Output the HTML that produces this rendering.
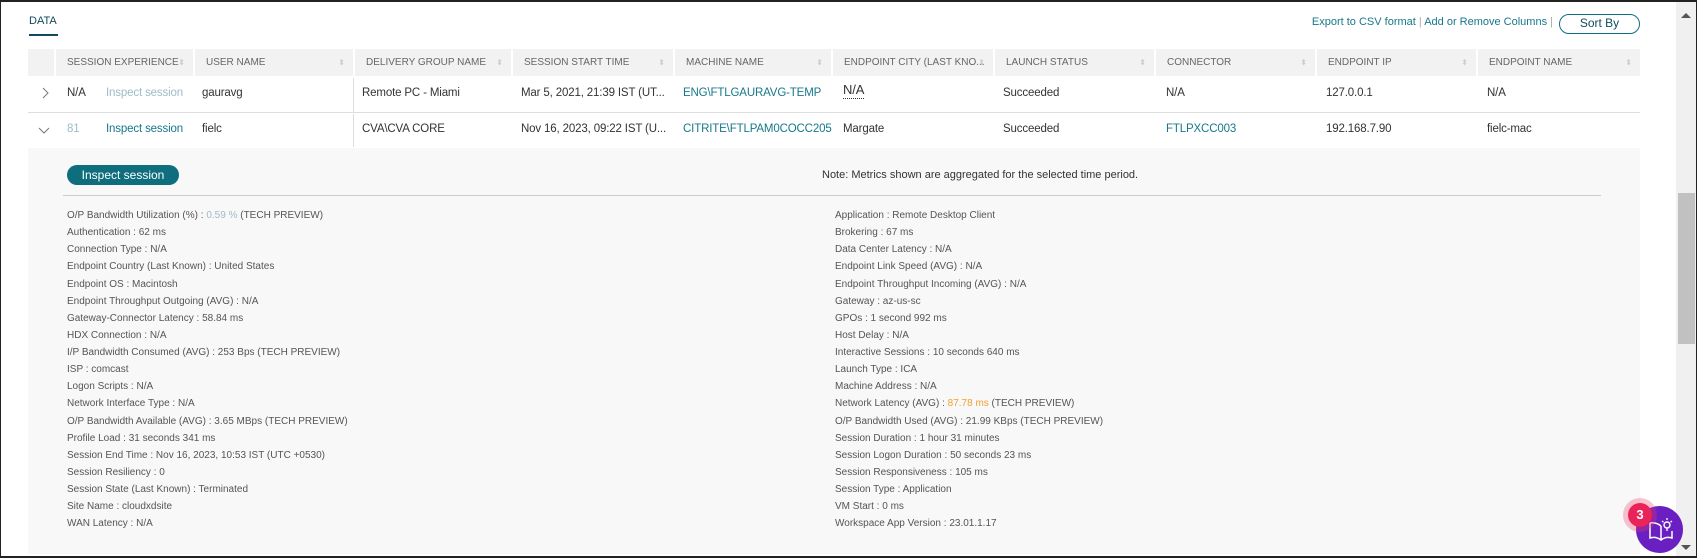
<!DOCTYPE html>
<html><head><meta charset="utf-8"><style>
*{margin:0;padding:0;box-sizing:border-box}
body{width:1697px;height:558px;overflow:hidden;background:#fff;font-family:"Liberation Sans",sans-serif;position:relative;color:#333}
.frame{position:absolute;left:0;top:0;width:1697px;height:558px;border:1px solid #222;border-top:2px solid #222;border-bottom:2px solid #222}
.abs{position:absolute;white-space:nowrap}
.hdr{position:absolute;top:49px;height:27px;background:#f2f2f2;font-size:10px;color:#666;line-height:27px;padding-left:11px;overflow:hidden;white-space:nowrap}
.hdr .s{position:absolute;right:8px;top:0;color:#ccc;font-size:8px}
.cell{position:absolute;font-size:11.5px;letter-spacing:-0.15px;line-height:14px;white-space:nowrap;color:#333}
.teal{color:#17788a}
.d{position:absolute;font-size:10px;color:#555;white-space:nowrap;line-height:12px}
.g{color:#9dbcc8}.o{color:#f0a030}
</style></head><body>
<div class="abs" style="left:29px;top:15px;font-size:11px;color:#124a5c">DATA</div>
<div class="abs" style="left:29px;top:34px;width:29px;height:2px;background:#124a5c"></div>
<div class="abs" style="right:144px;top:16px;font-size:11px;color:#17788a">Export to CSV format <span style="color:#aaa">|</span> Add or Remove Columns <span style="color:#aaa">|</span></div>
<div class="abs" style="left:1559px;top:14px;width:81px;height:20px;border:1.5px solid #0f6f80;border-radius:10px;text-align:center;font-size:12px;line-height:17px;color:#124a5c">Sort By</div>

<div class="hdr" style="left:28px;width:26px"></div>
<div class="hdr" style="left:56px;width:137px">SESSION EXPERIENCE<span class="s">⬍</span></div>
<div class="hdr" style="left:195px;width:158px">USER NAME<span class="s">⬍</span></div>
<div class="hdr" style="left:355px;width:156px">DELIVERY GROUP NAME<span class="s">⬍</span></div>
<div class="hdr" style="left:513px;width:160px">SESSION START TIME<span class="s">⬍</span></div>
<div class="hdr" style="left:675px;width:156px">MACHINE NAME<span class="s">⬍</span></div>
<div class="hdr" style="left:833px;width:160px">ENDPOINT CITY (LAST KNO...<span class="s">⬍</span></div>
<div class="hdr" style="left:995px;width:159px">LAUNCH STATUS<span class="s">⬍</span></div>
<div class="hdr" style="left:1156px;width:159px">CONNECTOR<span class="s">⬍</span></div>
<div class="hdr" style="left:1317px;width:159px">ENDPOINT IP<span class="s">⬍</span></div>
<div class="hdr" style="left:1478px;width:162px">ENDPOINT NAME<span class="s">⬍</span></div>

<div class="abs" style="left:28px;top:112px;width:1612px;height:1px;background:#ddd"></div>
<div class="abs" style="left:353px;top:78px;width:1px;height:34px;background:#ddd"></div>
<div class="abs" style="left:353px;top:114px;width:1px;height:33px;background:#ddd"></div>
<svg class="abs" style="left:41px;top:87px" width="10" height="12"><path d="M2 1 L7 6 L2 11" fill="none" stroke="#777" stroke-width="1"/></svg>
<svg class="abs" style="left:38px;top:127px" width="12" height="8"><path d="M1 1 L6 6 L11 1" fill="none" stroke="#777" stroke-width="1"/></svg>
<div class="cell" style="left:67px;top:86px">N/A</div>
<div class="cell g" style="left:106px;top:86px">Inspect session</div>
<div class="cell" style="left:202px;top:86px">gauravg</div>
<div class="cell" style="left:362px;top:86px">Remote PC - Miami</div>
<div class="cell" style="left:521px;top:86px">Mar 5, 2021, 21:39 IST (UT...</div>
<div class="cell teal" style="left:683px;top:86px">ENG\FTLGAURAVG-TEMP</div>
<div class="cell" style="left:843px;top:83px;font-size:13px;border-bottom:1px dotted #333;padding-bottom:1px">N/A</div>
<div class="cell" style="left:1003px;top:86px">Succeeded</div>
<div class="cell" style="left:1166px;top:86px">N/A</div>
<div class="cell" style="left:1326px;top:86px">127.0.0.1</div>
<div class="cell" style="left:1487px;top:86px">N/A</div>

<div class="cell g" style="left:67px;top:122px">81</div>
<div class="cell teal" style="left:106px;top:122px">Inspect session</div>
<div class="cell" style="left:202px;top:122px">fielc</div>
<div class="cell" style="left:362px;top:122px">CVA\CVA CORE</div>
<div class="cell" style="left:521px;top:122px">Nov 16, 2023, 09:22 IST (U...</div>
<div class="cell teal" style="left:683px;top:122px">CITRITE\FTLPAM0COCC205</div>
<div class="cell" style="left:843px;top:122px">Margate</div>
<div class="cell" style="left:1003px;top:122px">Succeeded</div>
<div class="cell teal" style="left:1166px;top:122px">FTLPXCC003</div>
<div class="cell" style="left:1326px;top:122px">192.168.7.90</div>
<div class="cell" style="left:1487px;top:122px">fielc-mac</div>

<div class="abs" style="left:28px;top:148px;width:1612px;height:406px;background:#f8f8f8"></div>
<div class="abs" style="left:67px;top:165px;width:112px;height:20px;border-radius:10px;background:#0e6e7e;color:#fff;font-size:12px;line-height:20px;text-align:center">Inspect session</div>
<div class="abs" style="left:822px;top:169px;font-size:11px;color:#333">Note: Metrics shown are aggregated for the selected time period.</div>
<div class="abs" style="left:63px;top:195px;width:1538px;height:1px;background:#ccc"></div>

<div style="position:absolute;left:0;top:2px;width:1px;height:1px"></div>
<div class="d" style="left:67px;top:210px">O/P Bandwidth Utilization (%) : <span class="g">0.59 %</span> (TECH PREVIEW)</div>
<div class="d" style="left:67px;top:227px">Authentication : 62 ms</div>
<div class="d" style="left:67px;top:244px">Connection Type : N/A</div>
<div class="d" style="left:67px;top:261px">Endpoint Country (Last Known) : United States</div>
<div class="d" style="left:67px;top:279px">Endpoint OS : Macintosh</div>
<div class="d" style="left:67px;top:296px">Endpoint Throughput Outgoing (AVG) : N/A</div>
<div class="d" style="left:67px;top:313px">Gateway-Connector Latency : 58.84 ms</div>
<div class="d" style="left:67px;top:330px">HDX Connection : N/A</div>
<div class="d" style="left:67px;top:347px">I/P Bandwidth Consumed (AVG) : 253 Bps (TECH PREVIEW)</div>
<div class="d" style="left:67px;top:364px">ISP : comcast</div>
<div class="d" style="left:67px;top:381px">Logon Scripts : N/A</div>
<div class="d" style="left:67px;top:398px">Network Interface Type : N/A</div>
<div class="d" style="left:67px;top:416px">O/P Bandwidth Available (AVG) : 3.65 MBps (TECH PREVIEW)</div>
<div class="d" style="left:67px;top:433px">Profile Load : 31 seconds 341 ms</div>
<div class="d" style="left:67px;top:450px">Session End Time : Nov 16, 2023, 10:53 IST (UTC +0530)</div>
<div class="d" style="left:67px;top:467px">Session Resiliency : 0</div>
<div class="d" style="left:67px;top:484px">Session State (Last Known) : Terminated</div>
<div class="d" style="left:67px;top:501px">Site Name : cloudxdsite</div>
<div class="d" style="left:67px;top:518px">WAN Latency : N/A</div>

<div class="d" style="left:835px;top:210px">Application : Remote Desktop Client</div>
<div class="d" style="left:835px;top:227px">Brokering : 67 ms</div>
<div class="d" style="left:835px;top:244px">Data Center Latency : N/A</div>
<div class="d" style="left:835px;top:261px">Endpoint Link Speed (AVG) : N/A</div>
<div class="d" style="left:835px;top:279px">Endpoint Throughput Incoming (AVG) : N/A</div>
<div class="d" style="left:835px;top:296px">Gateway : az-us-sc</div>
<div class="d" style="left:835px;top:313px">GPOs : 1 second 992 ms</div>
<div class="d" style="left:835px;top:330px">Host Delay : N/A</div>
<div class="d" style="left:835px;top:347px">Interactive Sessions : 10 seconds 640 ms</div>
<div class="d" style="left:835px;top:364px">Launch Type : ICA</div>
<div class="d" style="left:835px;top:381px">Machine Address : N/A</div>
<div class="d" style="left:835px;top:398px">Network Latency (AVG) : <span class="o">87.78 ms</span> (TECH PREVIEW)</div>
<div class="d" style="left:835px;top:416px">O/P Bandwidth Used (AVG) : 21.99 KBps (TECH PREVIEW)</div>
<div class="d" style="left:835px;top:433px">Session Duration : 1 hour 31 minutes</div>
<div class="d" style="left:835px;top:450px">Session Logon Duration : 50 seconds 23 ms</div>
<div class="d" style="left:835px;top:467px">Session Responsiveness : 105 ms</div>
<div class="d" style="left:835px;top:484px">Session Type : Application</div>
<div class="d" style="left:835px;top:501px">VM Start : 0 ms</div>
<div class="d" style="left:835px;top:518px">Workspace App Version : 23.01.1.17</div>

<div class="abs" style="left:1676px;top:0;width:21px;height:558px;background:#f0f0f0"></div>
<div class="abs" style="left:1678px;top:193px;width:17px;height:151px;background:#c1c1c1"></div>
<svg class="abs" style="left:1681px;top:12px" width="10" height="8"><path d="M0 6 L5 1 L10 6Z" fill="#555"/></svg>
<svg class="abs" style="left:1681px;top:544px" width="10" height="8"><path d="M0 1 L5 6 L10 1Z" fill="#555"/></svg>

<div class="abs" style="left:1636px;top:506px;width:47px;height:47px;border-radius:50%;background:#6a1fc2"></div>
<svg class="abs" style="left:1646px;top:514px" width="30" height="30" viewBox="0 0 30 30"><path d="M4 9 L4 24 Q10 22 15 26 Q20 22 26 24 L26 17 M15 12 L15 26 M15 12 Q10 8 4 9" fill="none" stroke="#fff" stroke-width="1.5"/><circle cx="21" cy="11" r="3" fill="none" stroke="#fff" stroke-width="1.4"/><path d="M21 4v2M16 7l1.5 1.2M26 7l-1.5 1.2M21 14v3" stroke="#fff" stroke-width="1.3"/></svg>
<div class="abs" style="left:1623px;top:498px;width:34px;height:34px;border-radius:50%;background:rgba(240,60,100,0.3)"></div>
<div class="abs" style="left:1628px;top:503px;width:24px;height:24px;border-radius:50%;background:#ea2458;color:#fff;font-size:13px;font-weight:bold;line-height:24px;text-align:center">3</div>
<div class="frame"></div>
</body></html>
